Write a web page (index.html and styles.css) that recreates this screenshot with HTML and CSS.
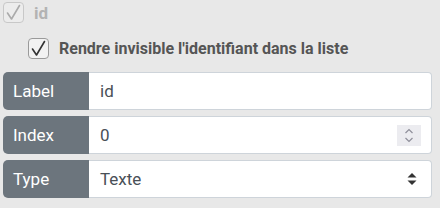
FILE: index.html
```html
<!DOCTYPE html>
<html lang="fr">
<head>
    <meta charset="UTF-8">
    <title>Champ id</title>
    <link rel="stylesheet" href="styles.css">
</head>
<body>
    <div class="field-panel">
        <label class="check disabled">
            <span class="box">
                <svg width="21" height="21" viewBox="0 0 21 21"><path d="M4.5 11 L8.5 17 L16.5 3.5" fill="none" stroke="currentColor" stroke-width="1.6" stroke-linecap="round" stroke-linejoin="round"/></svg>
            </span>
            <span class="check-text">id</span>
        </label>

        <label class="check sub">
            <span class="box">
                <svg width="21" height="21" viewBox="0 0 21 21"><path d="M4.5 11 L8.5 17 L16.5 3.5" fill="none" stroke="currentColor" stroke-width="1.6" stroke-linecap="round" stroke-linejoin="round"/></svg>
            </span>
            <span class="check-text">Rendre invisible l'identifiant dans la liste</span>
        </label>

        <div class="input-group">
            <span class="group-label">Label</span>
            <div class="group-input">id</div>
        </div>

        <div class="input-group">
            <span class="group-label">Index</span>
            <div class="group-input">
                <span>0</span>
                <span class="spinner">
                    <svg width="24" height="21" viewBox="0 0 24 21"><path d="M8.5 8 L12 4.5 L15.5 8" fill="none" stroke="#8f8f9a" stroke-width="1.2"/><path d="M8.5 13 L12 16.5 L15.5 13" fill="none" stroke="#8f8f9a" stroke-width="1.2"/></svg>
                </span>
            </div>
        </div>

        <div class="input-group">
            <span class="group-label">Type</span>
            <div class="group-input">
                <span>Texte</span>
                <svg class="select-arrow" width="12" height="14" viewBox="0 0 12 14"><path d="M1.5 5.5 L6 1 L10.5 5.5 Z" fill="#333"/><path d="M1.5 8.5 L6 13 L10.5 8.5 Z" fill="#333"/></svg>
            </div>
        </div>
    </div>
</body>
</html>
```

FILE: styles.css
```css
body {
    margin: 0;
    background-color: #e8e8e8;
    font-family: Roboto, "Liberation Sans", sans-serif;
}

.field-panel {
    padding: 2px 8px 0 3px;
}

.check {
    display: flex;
    align-items: center;
    gap: 10px;
    height: 21px;
}

.check .box {
    width: 19px;
    height: 19px;
    border: 1px solid #9a9a9a;
    border-radius: 4px;
    background-color: #f2f2f2;
    color: #333;
    position: relative;
}

.check .box svg {
    position: absolute;
    left: -1px;
    top: -1px;
}

.check-text {
    font-weight: bold;
    font-size: 16px;
    color: #555;
}

.check.disabled .box {
    border-color: #c8c8c8;
    background-color: #ececec;
    color: #aaa;
}

.check.disabled .check-text {
    color: #b3b3b3;
    font-size: 17px;
}

.check.sub {
    margin: 15px 0 13px 25px;
}

.input-group {
    display: flex;
    height: 38px;
    margin-bottom: 6px;
}

.group-label {
    width: 76px;
    padding-left: 10px;
    display: flex;
    align-items: center;
    background-color: #6c757d;
    color: #fff;
    font-size: 17px;
    border-radius: 5px 0 0 5px;
}

.group-input {
    flex: 1;
    display: flex;
    align-items: center;
    justify-content: space-between;
    padding: 0 10px 0 11px;
    background-color: #fff;
    border: 1px solid #ced4da;
    border-left: none;
    border-radius: 0 4px 4px 0;
    font-size: 17px;
    color: #495057;
}

.spinner {
    display: flex;
    width: 24px;
    height: 21px;
    background-color: #ececf0;
}

.select-arrow {
    margin-right: 3px;
}
```
